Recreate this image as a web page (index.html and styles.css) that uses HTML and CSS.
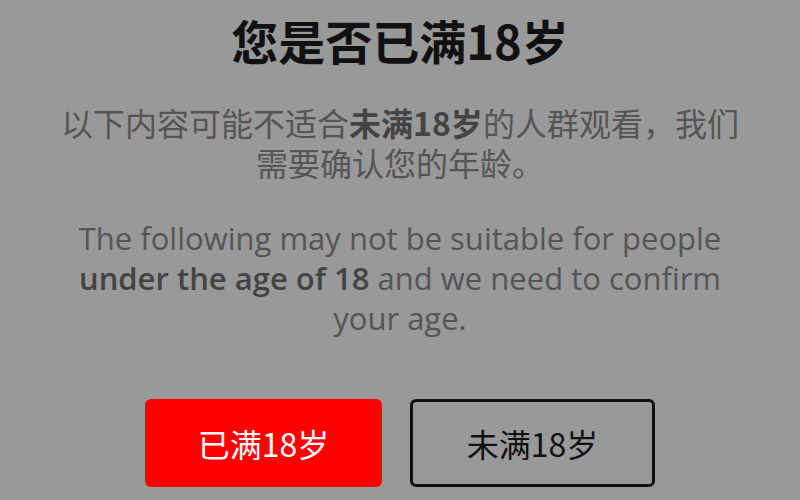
FILE: index.html
```html
<!DOCTYPE html>
<html lang="zh-CN">
<head>
    <meta charset="UTF-8">
    <meta name="viewport" content="width=device-width, initial-scale=1.0">
    <title>年龄确认</title>
    <link rel="stylesheet" href="styles.css">
</head>
<body>

    <!-- Finestra di conferma età -->
    <div class="age-gate">
        <h1 class="titolo">您是否已满18岁</h1>
        <p class="testo-cn">以下内容可能不适合<strong>未满18岁</strong>的人群观看，我们需要确认您的年龄。</p>
        <p class="testo-en">The following may not be suitable for people <strong>under the age of 18</strong> and we need to confirm your age.</p>

        <div class="pulsanti">
            <button class="btn btn-si">已满18岁</button>
            <button class="btn btn-no">未满18岁</button>
        </div>
    </div>

</body>
</html>
```

FILE: styles.css
```css
body {
    margin: 0;
    background-color: #999999;
    font-family: "Noto Sans CJK SC", sans-serif;
}
.age-gate {
    padding: 10px 60px 0;
    text-align: center;
}
.titolo {
    margin: 0;
    font-size: 47px;
    line-height: 60px;
    font-weight: bold;
    color: #111;
}
.testo-cn {
    margin: 32px 0 0;
    font-size: 32px;
    line-height: 40px;
    color: #555;
}
.testo-en {
    margin: 36px 0 0;
    font-family: "Open Sans", "Noto Sans CJK SC", sans-serif;
    font-size: 31px;
    line-height: 40px;
    color: #555;
}
.testo-en strong {
    font-weight: 600;
}
strong {
    color: #444;
}
.pulsanti {
    display: flex;
    justify-content: center;
    gap: 28px;
    margin-top: 61px;
}
.btn {
    height: 88px;
    border-radius: 6px;
    font-family: "Noto Sans CJK SC", sans-serif;
    font-size: 32px;
    cursor: pointer;
}
.btn-si {
    width: 237px;
    background-color: #ff0000;
    color: #fff;
    border: none;
}
.btn-no {
    width: 245px;
    background-color: transparent;
    color: #111;
    border: 3px solid #111;
}
```
